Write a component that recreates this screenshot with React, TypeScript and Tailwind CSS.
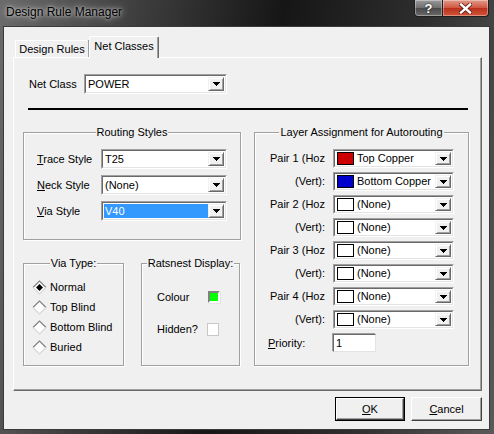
import React from 'react';

interface ComboProps {
  value: string;
  className: string;
  selected?: boolean;
  swatch?: string;
}

// small black triangle of the classic drop-down button
const Arrow = () => (
  <svg width="7" height="4" viewBox="0 0 7 4" shapeRendering="crispEdges">
    <polygon points="0,0 7,0 3.5,4" fill="#000" />
  </svg>
);

const Combo: React.FC<ComboProps> = ({ value, className, selected, swatch }) => (
  <div
    className={`flex border border-t-[#a0a0a0] border-l-[#a0a0a0] border-b-white border-r-white ${className}`}
  >
    <div className="flex flex-1 border border-t-[#696969] border-l-[#696969] border-b-[#e3e3e3] border-r-[#e3e3e3] bg-white p-[1px]">
      <div
        className={`flex min-w-0 flex-1 items-center whitespace-nowrap pl-[1px] ${
          selected ? 'bg-[#3399ff] text-white' : ''
        }`}
      >
        {swatch && <span className={`mr-[3px] h-[13px] w-[17px] shrink-0 border border-black ${swatch}`} />}
        {value}
      </div>
      <div className="flex w-[16px] items-center justify-center border border-t-[#f0f0f0] border-l-[#f0f0f0] border-b-[#696969] border-r-[#696969] bg-[#f0f0f0] shadow-[inset_1px_1px_0_white,inset_-1px_-1px_0_#a0a0a0]">
        <Arrow />
      </div>
    </div>
  </div>
);

interface GroupProps {
  title: string;
  className: string;
  children?: React.ReactNode;
}

// etched group box with its caption sitting on the top edge
const Group: React.FC<GroupProps> = ({ title, className, children }) => (
  <div
    className={`flex flex-col border border-[#a0a0a0] shadow-[inset_1px_1px_0_white,1px_1px_0_white] ${className}`}
  >
    <div className="mx-auto -mt-[7px] h-[13px] bg-[#f0f0f0] px-[1px] leading-[13px]">{title}</div>
    {children}
  </div>
);

const Diamond = ({ checked }: { checked?: boolean }) => (
  <svg width="15" height="15" viewBox="0 0 15 15">
    <polygon points="7.5,1 14,7.5 7.5,14 1,7.5" fill="#fff" />
    <polyline points="1,7.5 7.5,1 14,7.5" fill="none" stroke="#808080" strokeWidth="1.2" />
    <polyline points="14,7.5 7.5,14 1,7.5" fill="none" stroke="#d8d8d8" strokeWidth="1.2" />
    {checked && <polygon points="7.5,4 11,7.5 7.5,11 4,7.5" fill="#000" />}
  </svg>
);

const U = ({ children }: { children: React.ReactNode }) => <span className="underline">{children}</span>;

const layerRows = [
  { label: 'Pair 1 (Hoz', value: 'Top Copper', swatch: 'bg-[#cc0000]' },
  { label: '(Vert):', value: 'Bottom Copper', swatch: 'bg-[#0000cc]' },
  { label: 'Pair 2 (Hoz', value: '(None)', swatch: 'bg-white' },
  { label: '(Vert):', value: '(None)', swatch: 'bg-white' },
  { label: 'Pair 3 (Hoz', value: '(None)', swatch: 'bg-white' },
  { label: '(Vert):', value: '(None)', swatch: 'bg-white' },
  { label: 'Pair 4 (Hoz', value: '(None)', swatch: 'bg-white' },
  { label: '(Vert):', value: '(None)', swatch: 'bg-white' },
];

const App: React.FC = () => {
  return (
    <div className="flex h-[434px] w-[494px] flex-col bg-[linear-gradient(100deg,#6b6b6b_0%,#3d3d3d_25%,#161616_50%,#2e2e2e_75%,#5a5a5a_100%)] font-['Liberation_Sans',Arial,sans-serif] text-[11px] text-black">
      {/* Title bar */}
      <div className="flex h-[26px] items-start justify-between">
        <div className="ml-[6px] mt-[5px] text-[12px] leading-[15px] [text-shadow:0_0_7px_rgba(255,255,255,0.85),0_0_3px_rgba(255,255,255,0.6)]">
          Design Rule Manager
        </div>
        <div className="mr-[5px] flex h-[17px]">
          <div className="flex w-[29px] items-center justify-center rounded-bl-[4px] border border-t-0 border-[#1e1e1e] bg-[linear-gradient(180deg,#9a9a9a_0%,#6e6e6e_50%,#4a4a4a_51%,#6a6a6a_100%)] text-[13px] font-bold leading-none text-white shadow-[inset_0_0_0_1px_rgba(255,255,255,0.35)] [text-shadow:0_0_2px_#000]">
            ?
          </div>
          <div className="flex w-[46px] items-center justify-center rounded-br-[4px] border border-l-0 border-t-0 border-[#1e1e1e] bg-[linear-gradient(180deg,#e09a8a_0%,#d0553f_50%,#b8301c_51%,#d2553a_100%)] shadow-[inset_0_0_0_1px_rgba(255,255,255,0.35)]">
            <svg width="13" height="11" viewBox="0 0 13 11">
              <path d="M2 1.5L11 9.5M11 1.5L2 9.5" stroke="#5a1a10" strokeWidth="4" strokeLinecap="square" />
              <path d="M2 1.5L11 9.5M11 1.5L2 9.5" stroke="#fff" strokeWidth="2.4" strokeLinecap="square" />
            </svg>
          </div>
        </div>
      </div>

      {/* Client area */}
      <div className="ml-[3px] flex h-[404px] w-[487px] flex-col border border-[#3a3a3a] bg-[#f0f0f0] pl-[9px] pt-[9px]">
        {/* Tabs */}
        <div className="relative z-10 flex h-[21px] items-end pl-[2px]">
          <div className="flex h-[17px] w-[74px] items-center justify-center rounded-t-[2px] border border-b-0 border-t-white border-l-white border-r-[#a0a0a0] bg-[#f0f0f0] pt-[1px] shadow-[1px_0_0_#696969]">
            Design Rules
          </div>
          <div className="-mb-[1px] flex h-[22px] w-[70px] items-center justify-center rounded-t-[2px] border border-b-0 border-t-white border-l-white border-r-[#696969] bg-[#f0f0f0] pb-[2px] shadow-[inset_-1px_0_0_#a0a0a0]">
            Net Classes
          </div>
        </div>

        {/* Tab page */}
        <div className="flex h-[334px] w-[469px] flex-col border border-t-white border-l-white border-r-[#696969] border-b-[#696969] shadow-[inset_-1px_-1px_0_#a0a0a0]">
          <div className="ml-[15px] mt-[16px] flex items-center">
            <div className="w-[55px]">Net Class</div>
            <Combo value="POWER" className="h-[20px] w-[143px]" />
          </div>

          <div className="ml-[14px] mt-[14px] h-[2px] w-[440px] bg-black" />

          <div className="ml-[9px] mt-[22px] flex">
            {/* Left column */}
            <div className="flex w-[218px] flex-col">
              <Group title="Routing Styles" className="h-[108px] w-[218px]">
                <div className="mt-[10px] flex flex-col gap-[6px] pl-[13px]">
                  <div className="flex h-[20px] items-center">
                    <div className="w-[64px]">
                      <U>T</U>race Style
                    </div>
                    <Combo value="T25" className="h-[20px] w-[126px]" />
                  </div>
                  <div className="flex h-[20px] items-center">
                    <div className="w-[64px]">
                      <U>N</U>eck Style
                    </div>
                    <Combo value="(None)" className="h-[20px] w-[126px]" />
                  </div>
                  <div className="flex h-[20px] items-center">
                    <div className="w-[64px]">
                      <U>V</U>ia Style
                    </div>
                    <Combo value="V40" selected className="h-[20px] w-[126px]" />
                  </div>
                </div>
              </Group>

              <div className="mt-[23px] flex">
                <Group title="Via Type:" className="h-[103px] w-[101px]">
                  <div className="mt-[7px] flex flex-col pl-[8px]">
                    {['Normal', 'Top Blind', 'Bottom Blind', 'Buried'].map((t, i) => (
                      <div key={t} className="flex h-[20px] items-center gap-[3px]">
                        <Diamond checked={i === 0} />
                        <span>{t}</span>
                      </div>
                    ))}
                  </div>
                </Group>

                <Group title="Ratsnest Display:" className="ml-[17px] h-[103px] w-[99px]">
                  <div className="mt-[20px] flex h-[14px] items-center pl-[15px]">
                    <div className="w-[51px]">Colour</div>
                    <span className="h-[12px] w-[12px] border-2 border-t-[#808080] border-l-[#808080] border-b-white border-r-white bg-[#00ff00] shadow-[1px_1px_0_#e3e3e3]" />
                  </div>
                  <div className="mt-[18px] flex h-[14px] items-center pl-[15px]">
                    <div className="w-[50px]">Hidden?</div>
                    <span className="h-[13px] w-[12px] border border-[#c8c8c8] bg-white" />
                  </div>
                </Group>
              </div>
            </div>

            {/* Right column */}
            <Group title="Layer Assignment for Autorouting" className="ml-[13px] h-[234px] w-[215px]">
              <div className="mt-[10px] flex flex-col gap-[4px] pl-[13px]">
                {layerRows.map((r, i) => (
                  <div key={i} className="flex h-[19px] items-center">
                    <div className="w-[57px] whitespace-nowrap text-right">{r.label}</div>
                    <Combo value={r.value} swatch={r.swatch} className="ml-[8px] h-[19px] w-[121px]" />
                  </div>
                ))}
                <div className="mt-[1px] flex h-[18px] items-center">
                  <div className="w-[57px]">
                    <U>P</U>riority:
                  </div>
                  <div className="ml-[8px] flex h-[18px] w-[43px] items-center border border-t-[#696969] border-l-[#696969] border-b-[#e3e3e3] border-r-[#e3e3e3] bg-white pl-[2px] shadow-[-1px_-1px_0_#a0a0a0]">
                    1
                  </div>
                </div>
              </div>
            </Group>
          </div>
        </div>

        {/* Buttons */}
        <div className="mt-[6px] flex w-[469px] justify-end gap-[6px]">
          <button className="h-[24px] w-[70px] border border-black bg-[#f0f0f0]">
            <div className="flex h-full w-full items-center justify-center border border-t-white border-l-white border-b-[#404040] border-r-[#404040] shadow-[inset_-1px_-1px_0_#a0a0a0]">
              <U>O</U>K
            </div>
          </button>
          <button className="flex h-[24px] w-[71px] items-center justify-center border border-t-white border-l-white border-b-[#404040] border-r-[#404040] bg-[#f0f0f0] shadow-[inset_-1px_-1px_0_#a0a0a0]">
            <span>
              <U>C</U>ancel
            </span>
          </button>
        </div>
      </div>
    </div>
  );
};

export default App;
